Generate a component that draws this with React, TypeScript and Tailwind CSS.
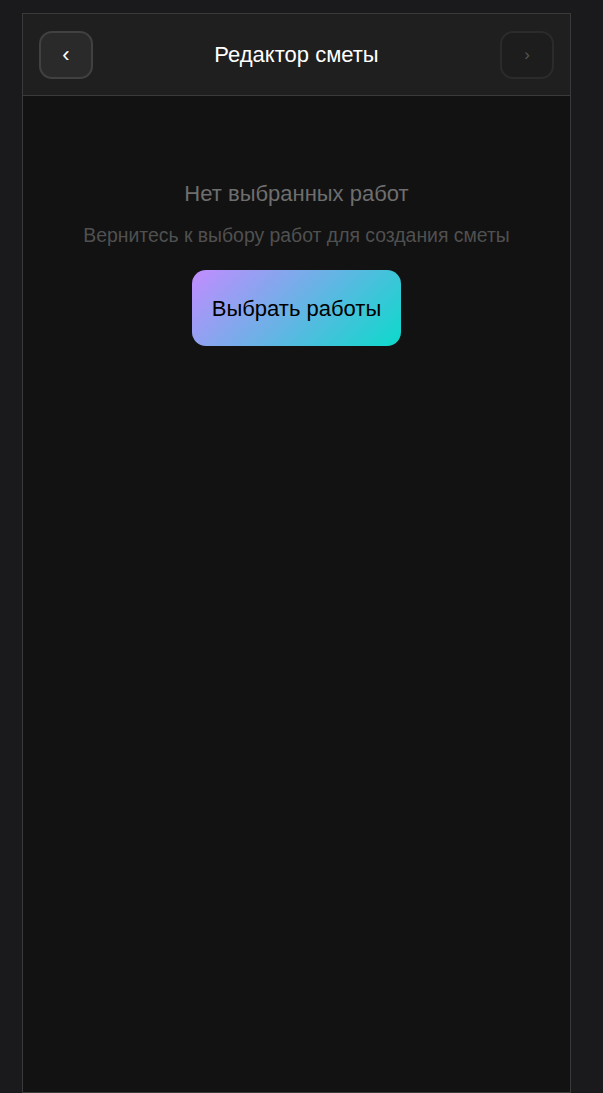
import React from "react";

export default function App() {
  return (
    <div
      className="min-h-[1093px] w-full bg-[#1a1a1c] pt-[13px]"
      style={{ fontFamily: '"Liberation Sans", Arial, sans-serif' }}
    >
      <div className="ml-[22px] flex h-[1080px] w-[549px] flex-col border border-[#3a3a3a] bg-[#121212]">
        <header className="flex h-[82px] items-center justify-between border-b border-[#3a3a3a] bg-[#1f1f1f] px-[16px]">
          <button className="flex h-[48px] w-[54px] items-center justify-center rounded-[13px] border-2 border-[#414141] bg-[#2a2a2a] text-[22px] text-white">
            ‹
          </button>
          <h1 className="text-[22px] text-white">Редактор сметы</h1>
          <button className="flex h-[48px] w-[54px] items-center justify-center rounded-[13px] border-2 border-[#2b2b2b] bg-[#1d1d1d] text-[17px] text-[#555]">
            ›
          </button>
        </header>
        <main className="flex flex-col items-center pt-[85px]">
          <p className="text-[22px] leading-[26px] text-[#6e6e6e]">Нет выбранных работ</p>
          <p className="mt-[17px] text-[19.4px] leading-[22px] text-[#505050]">
            Вернитесь к выбору работ для создания сметы
          </p>
          <button className="mt-[24px] h-[76px] w-[209px] rounded-[14px] bg-[linear-gradient(135deg,#c28cff,#0cdacb)] text-[22px] text-black">
            Выбрать работы
          </button>
        </main>
      </div>
    </div>
  );
}
